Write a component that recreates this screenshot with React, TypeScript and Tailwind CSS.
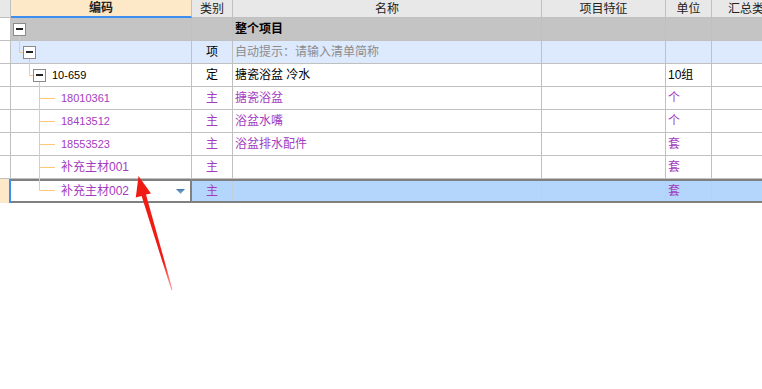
const purple = "text-[#a33cbf]";

type Item = {
  code: string;
  small?: boolean;
  kind: string;
  name?: string;
  unit: string;
};

const children: Item[] = [
  { code: "18010361", small: true, kind: "主", name: "搪瓷浴盆", unit: "个" },
  { code: "18413512", small: true, kind: "主", name: "浴盆水嘴", unit: "个" },
  { code: "18553523", small: true, kind: "主", name: "浴盆排水配件", unit: "套" },
  { code: "补充主材001", kind: "主", unit: "套" },
];

function MinusBox({ className = "" }: { className?: string }) {
  return (
    <div
      className={`w-[13px] h-[13px] shrink-0 border border-[#8a8a8a] bg-white flex items-center justify-center ${className}`}
    >
      <div className="w-[7px] h-[2px] bg-[#222]" />
    </div>
  );
}

function Header() {
  return (
    <div className="flex h-[18px] bg-[#e8e8e8] text-[12px] text-[#222]">
      <div className="w-[11px] shrink-0 border-r border-b border-[#c0c0c0]" />
      <div className="w-[181px] shrink-0 flex items-center justify-center font-bold bg-[#fde8c7] border-r border-[#c0c0c0] border-b-2 border-b-[#3d8fef]">
        编码
      </div>
      <div className="w-[41px] shrink-0 flex items-center justify-center border-r border-b border-[#c0c0c0]">
        类别
      </div>
      <div className="w-[309px] shrink-0 flex items-center justify-center border-r border-b border-[#c0c0c0]">
        名称
      </div>
      <div className="w-[124px] shrink-0 flex items-center justify-center border-r border-b border-[#c0c0c0]">
        项目特征
      </div>
      <div className="w-[46px] shrink-0 flex items-center justify-center border-r border-b border-[#c0c0c0]">
        单位
      </div>
      <div className="w-[80px] shrink-0 flex items-center justify-center border-b border-[#c0c0c0]">
        汇总类别
      </div>
    </div>
  );
}

function Row({
  bg = "bg-white",
  code,
  kind,
  name,
  unit,
  color = "text-black",
}: {
  bg?: string;
  code: React.ReactNode;
  kind?: string;
  name?: React.ReactNode;
  unit?: string;
  color?: string;
}) {
  return (
    <div className={`flex h-[23px] border-b border-[#c0c0c0] text-[12px] ${color}`}>
      <div className="w-[11px] shrink-0 bg-white border-r border-[#c0c0c0]" />
      <div className={`w-[181px] shrink-0 flex items-center border-r border-[#c0c0c0] ${bg}`}>
        {code}
      </div>
      <div className={`w-[41px] shrink-0 flex items-center justify-center border-r border-[#c0c0c0] ${bg}`}>
        {kind}
      </div>
      <div className={`w-[309px] shrink-0 flex items-center pl-[2px] border-r border-[#c0c0c0] ${bg}`}>
        {name}
      </div>
      <div className={`w-[124px] shrink-0 border-r border-[#c0c0c0] ${bg}`} />
      <div className={`w-[46px] shrink-0 flex items-center pl-[2px] border-r border-[#c0c0c0] ${bg}`}>
        {unit}
      </div>
      <div className={`w-[80px] shrink-0 ${bg}`} />
    </div>
  );
}

function SelectedRow() {
  return (
    <div className={`flex h-[24px] text-[12px] ${purple}`}>
      <div className="w-[11px] shrink-0 bg-[#fde8c7] border-r-2 border-[#3d8fef]" />
      <div className="flex border-y-2 border-[#808080]">
        <div className="w-[181px] shrink-0 flex items-center justify-between pl-[50px] pr-[5px] bg-white border-r-2 border-[#808080]">
          <span>补充主材002</span>
          <svg width="9" height="5" viewBox="0 0 9 5">
            <defs>
              <linearGradient id="tri" x1="0" y1="0" x2="0" y2="1">
                <stop offset="0" stopColor="#3f76a8" />
                <stop offset="1" stopColor="#8db8dc" />
              </linearGradient>
            </defs>
            <path d="M0 0H9L4.5 5Z" fill="url(#tri)" />
          </svg>
        </div>
        <div className="w-[41px] shrink-0 flex items-center justify-center bg-[#b4d5fc] border-r border-[#c4cfdc]">
          主
        </div>
        <div className="w-[309px] shrink-0 bg-[#b4d5fc] border-r border-[#c4cfdc]" />
        <div className="w-[124px] shrink-0 bg-[#b4d5fc] border-r border-[#c4cfdc]" />
        <div className="w-[46px] shrink-0 flex items-center pl-[2px] bg-[#b4d5fc] border-r border-[#c4cfdc]">
          套
        </div>
        <div className="w-[80px] shrink-0 bg-[#b4d5fc]" />
      </div>
    </div>
  );
}

function Overlay() {
  const branchYs = [98.5, 121.5, 144.5, 167.5, 190.5];
  return (
    <svg
      className="absolute top-0 left-0 pointer-events-none"
      width="762"
      height="389"
      viewBox="0 0 762 389"
    >
      <g stroke="#ffc77c" strokeWidth="1" fill="none">
        <path d="M19.5 36V52.5H23" />
        <path d="M29.5 59V75.5H33" />
        <path d="M39.5 82V190.5" />
        {branchYs.map((y) => (
          <path key={y} d={`M39.5 ${y}H55`} />
        ))}
      </g>
      <defs>
        <linearGradient id="arrowFade" x1="0" y1="0" x2="0" y2="1">
          <stop offset="0" stopColor="#f01c14" />
          <stop offset="0.75" stopColor="#f01c14" />
          <stop offset="1" stopColor="#f01c14" stopOpacity="0.35" />
        </linearGradient>
      </defs>
      <path
        d="M138.5 176L151 193.5L146 194.6L172.6 290L171.4 290.2L141.6 196L135.8 197.6Z"
        fill="url(#arrowFade)"
      />
    </svg>
  );
}

export default function App() {
  return (
    <div
      className="relative w-[762px] h-[389px] overflow-hidden bg-white"
      style={{ fontFamily: '"Liberation Sans", "Noto Sans CJK SC", sans-serif' }}
    >
      <div className="flex flex-col w-[800px]">
        <Header />
        <Row
          bg="bg-[#c4c4c4]"
          code={<MinusBox className="ml-[2px]" />}
          name={<span className="font-bold">整个项目</span>}
        />
        <Row
          bg="bg-[#dde9fd]"
          code={<MinusBox className="ml-[12px]" />}
          kind="项"
          name={<span className="text-[#8c8c8c]">自动提示：请输入清单简称</span>}
        />
        <Row
          code={
            <>
              <MinusBox className="ml-[22px]" />
              <span className="ml-[6px] text-[11px]">10-659</span>
            </>
          }
          kind="定"
          name="搪瓷浴盆 冷水"
          unit="10组"
        />
        {children.map((c) => (
          <Row
            key={c.code}
            color={purple}
            code={
              <span className={`ml-[50px] ${c.small ? "text-[11px]" : ""}`}>
                {c.code}
              </span>
            }
            kind={c.kind}
            name={c.name}
            unit={c.unit}
          />
        ))}
        <SelectedRow />
      </div>
      <Overlay />
    </div>
  );
}
